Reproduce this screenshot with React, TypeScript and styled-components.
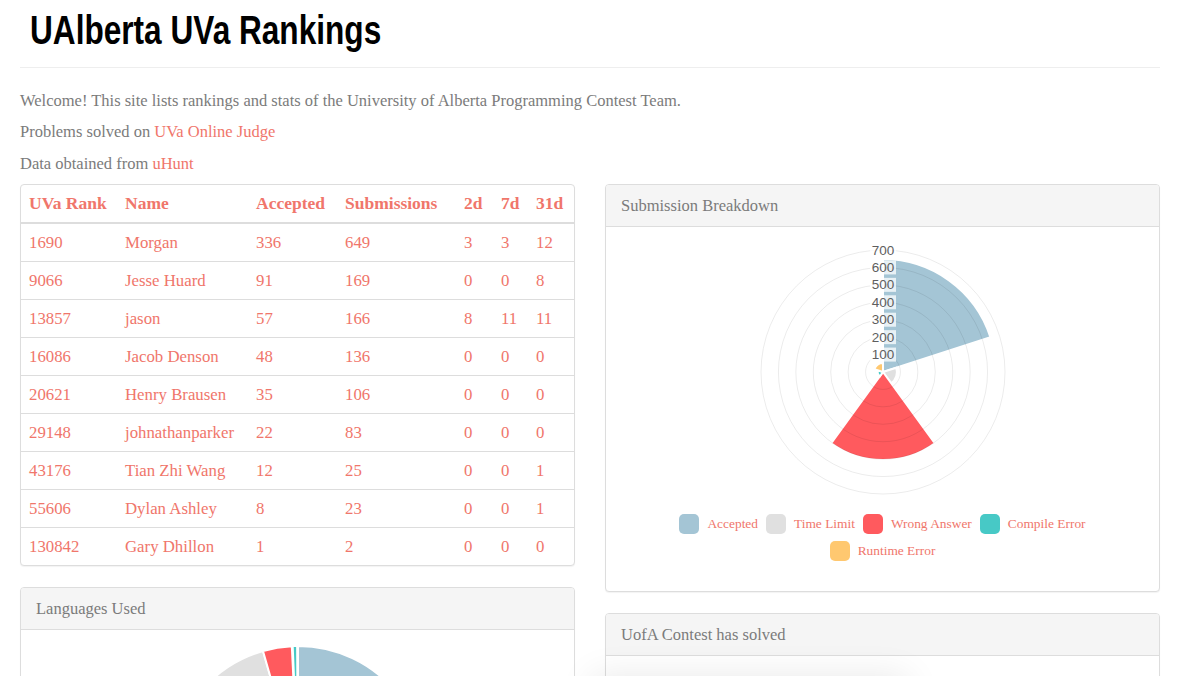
import React from "react";
import styled, { createGlobalStyle } from "styled-components";

const GlobalStyle = createGlobalStyle`
  html, body {
    margin: 0;
    padding: 0;
    background: #fff;
  }
  body {
    font-family: "Liberation Serif", "DejaVu Serif", serif;
    font-size: 16.5px;
    line-height: 1.42857;
    color: #7b7b7b;
    overflow: hidden;
  }
`

const salmon = "#f0766b"

const Page = styled.div`
  width: 1140px;
  margin-left: 20px;
  position: relative;
`

const Header = styled.div`
  border-bottom: 1px solid #eee;
  padding: 6px 0 13px 10px;
`

// the original uses a condensed gothic face; Arial bold squeezed horizontally is the nearest we have
const Title = styled.h1`
  margin: 0;
  font-family: "Liberation Sans", Arial, sans-serif;
  font-weight: bold;
  font-size: 40px;
  line-height: 48px;
  color: #000;
  transform: scaleX(0.79);
  transform-origin: left center;
  white-space: nowrap;
`

const Intro = styled.div`
  padding-top: 22px;
`

const Text = styled.p`
  margin: 0 0 10px 0;
  line-height: 21.4px;
`

const Link = styled.a`
  color: ${salmon};
  text-decoration: none;
`

const Columns = styled.div`
  display: grid;
  grid-template-columns: 555px 555px;
  column-gap: 30px;
  align-items: start;
`

const Column = styled.div`
  display: flex;
  flex-direction: column;
  gap: 21px;
`

const Panel = styled.div`
  border: 1px solid #ddd;
  border-radius: 4px;
  background: #fff;
  box-shadow: 0 1px 1px rgba(0, 0, 0, 0.05);
  overflow: hidden;
`

const PanelHeading = styled.div`
  background: #f5f5f5;
  border-bottom: 1px solid #ddd;
  padding: 10px 15px;
  font-size: 16.5px;
  line-height: 21px;
  color: #7b7b7b;
`

const ChartBody = styled.div<{ $pad?: string }>`
  display: flex;
  flex-direction: column;
  align-items: center;
  padding: ${({ $pad }) => ($pad ? $pad : "15px 0 30px 0")};
`

const Table = styled.table`
  width: 100%;
  table-layout: fixed;
  border-collapse: collapse;
  color: ${salmon};
  font-size: 16.8px;
`

// $w is the full column width, padding included
const Th = styled.th<{ $w?: number }>`
  width: ${({ $w }) => ($w ? `${$w - 16}px` : "auto")};
  text-align: left;
  font-weight: bold;
  font-size: 17.5px;
  padding: 8px;
  line-height: 21px;
  border-bottom: 2px solid #ddd;
  white-space: nowrap;
`

const Td = styled.td`
  padding: 8px;
  line-height: 21px;
  border-top: 1px solid #ddd;
  white-space: nowrap;
`

const FirstRow = styled.tr`
  & > td {
    border-top: none;
  }
`

const Legend = styled.div`
  display: flex;
  flex-wrap: wrap;
  justify-content: center;
  row-gap: 7px;
  width: 430px;
  margin-top: 12px;
`

const LegendItem = styled.div`
  display: flex;
  align-items: center;
  margin: 0 4px;
  font-size: 13.4px;
  line-height: 20px;
  color: ${salmon};
`

const Swatch = styled.span<{ $color: string }>`
  width: 20px;
  height: 20px;
  border-radius: 5px;
  background: ${({ $color }) => $color};
  margin-right: 8px;
`

const Glow = styled.div`
  position: absolute;
  left: 580px;
  top: 684px;
  width: 300px;
  height: 60px;
  background: #fff;
  box-shadow: 0 0 36px 8px rgba(0, 0, 0, 0.09);
`

const rows = [
  ["1690", "Morgan", "336", "649", "3", "3", "12"],
  ["9066", "Jesse Huard", "91", "169", "0", "0", "8"],
  ["13857", "jason", "57", "166", "8", "11", "11"],
  ["16086", "Jacob Denson", "48", "136", "0", "0", "0"],
  ["20621", "Henry Brausen", "35", "106", "0", "0", "0"],
  ["29148", "johnathanparker", "22", "83", "0", "0", "0"],
  ["43176", "Tian Zhi Wang", "12", "25", "0", "0", "1"],
  ["55606", "Dylan Ashley", "8", "23", "0", "0", "1"],
  ["130842", "Gary Dhillon", "1", "2", "0", "0", "0"],
]

const colors = {
  blue: "#a4c5d5",
  gray: "#e0e0e0",
  red: "#ff5a5e",
  teal: "#47c9c6",
  orange: "#ffc870",
}

// sector path, angles in degrees clockwise from 3 o'clock
function sector(cx: number, cy: number, r: number, a0: number, a1: number) {
  const rad = (a: number) => (a * Math.PI) / 180
  const x0 = cx + r * Math.cos(rad(a0))
  const y0 = cy + r * Math.sin(rad(a0))
  const x1 = cx + r * Math.cos(rad(a1))
  const y1 = cy + r * Math.sin(rad(a1))
  const large = a1 - a0 > 180 ? 1 : 0
  return `M${cx},${cy} L${x0},${y0} A${r},${r} 0 ${large} 1 ${x1},${y1} Z`
}

const breakdown = [
  { label: "Accepted", value: 648, color: colors.blue },
  { label: "Time Limit", value: 80, color: colors.gray },
  { label: "Wrong Answer", value: 505, color: colors.red },
  { label: "Compile Error", value: 30, color: colors.teal },
  { label: "Runtime Error", value: 52, color: colors.orange },
]

function PolarChart() {
  const cx = 130
  const cy = 130
  const scale = 122 / 700
  const steps = [100, 200, 300, 400, 500, 600, 700]
  return (
    <svg width="260" height="260" viewBox="0 0 260 260">
      {breakdown.map((s, i) => (
        <path
          key={s.label}
          d={sector(cx, cy, s.value * scale, -90 + i * 72, -18 + i * 72)}
          fill={s.color}
          stroke="#fff"
          strokeWidth="2"
        />
      ))}
      {steps.map((v) => (
        <circle key={v} cx={cx} cy={cy} r={v * scale} fill="none" stroke="rgba(0,0,0,0.08)" strokeWidth="1" />
      ))}
      {steps.map((v) => (
        <g key={"l" + v}>
          <rect x={cx - 13} y={cy - v * scale - 7} width="26" height="14" fill="rgba(255,255,255,0.75)" />
          <text
            x={cx}
            y={cy - v * scale + 4.5}
            textAnchor="middle"
            fontFamily="'Liberation Sans', Arial, sans-serif"
            fontSize="13.5"
            fill="#5e5e5e"
          >
            {v}
          </text>
        </g>
      ))}
    </svg>
  )
}

const languages = [
  { from: 0, to: 215, color: colors.blue },
  { from: 215, to: 344, color: colors.gray },
  { from: 344, to: 357.2, color: colors.red },
  { from: 357.6, to: 359.6, color: colors.teal },
]

function PieChart() {
  const cx = 132
  const cy = 128
  const r = 127
  return (
    <svg width="264" height="258" viewBox="0 0 264 258">
      {languages.map((s) => (
        <path key={s.from} d={sector(cx, cy, r, s.from - 90, s.to - 90)} fill={s.color} stroke="#fff" strokeWidth="2" />
      ))}
    </svg>
  )
}

export default function App() {
  return (
    <>
      <GlobalStyle />
      <Page>
        <Header>
          <Title>UAlberta UVa Rankings</Title>
        </Header>
        <Intro>
          <Text>Welcome! This site lists rankings and stats of the University of Alberta Programming Contest Team.</Text>
          <Text>
            Problems solved on <Link href="#">UVa Online Judge</Link>
          </Text>
          <Text>
            Data obtained from <Link href="#">uHunt</Link>
          </Text>
        </Intro>
        <Columns>
          <Column>
            <Panel>
              <Table>
                <thead>
                  <tr>
                    <Th $w={96}>UVa Rank</Th>
                    <Th $w={131}>Name</Th>
                    <Th $w={89}>Accepted</Th>
                    <Th $w={119}>Submissions</Th>
                    <Th $w={37}>2d</Th>
                    <Th $w={35}>7d</Th>
                    <Th>31d</Th>
                  </tr>
                </thead>
                <tbody>
                  {rows.map((r, i) => {
                    const cells = r.map((c, j) => <Td key={j}>{c}</Td>)
                    return i === 0 ? <FirstRow key={r[0]}>{cells}</FirstRow> : <tr key={r[0]}>{cells}</tr>
                  })}
                </tbody>
              </Table>
            </Panel>
            <Panel>
              <PanelHeading>Languages Used</PanelHeading>
              <ChartBody $pad="15px 0 0 0">
                <PieChart />
              </ChartBody>
            </Panel>
          </Column>
          <Column>
            <Panel>
              <PanelHeading>Submission Breakdown</PanelHeading>
              <ChartBody>
                <PolarChart />
                <Legend>
                  {breakdown.map((s) => (
                    <LegendItem key={s.label}>
                      <Swatch $color={s.color} />
                      {s.label}
                    </LegendItem>
                  ))}
                </Legend>
              </ChartBody>
            </Panel>
            <Panel>
              <PanelHeading>UofA Contest has solved</PanelHeading>
              <ChartBody $pad="15px 0 0 0">
                <div style={{ height: 200 }} />
              </ChartBody>
            </Panel>
          </Column>
        </Columns>
        <Glow />
      </Page>
    </>
  )
}
